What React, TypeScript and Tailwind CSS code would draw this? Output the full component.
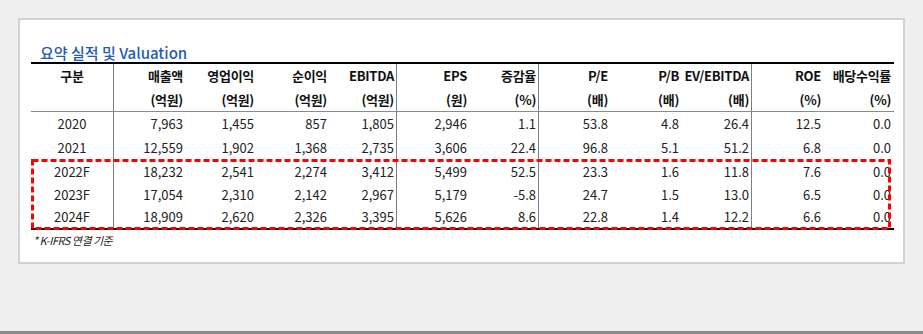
import React from "react";

type Col = { w: string; pr: string; top: string; bottom: string; sep?: boolean };

const cols: Col[] = [
  { w: "w-[83px]", pr: "", top: "구분", bottom: "", sep: true },
  { w: "w-[72px]", pr: "pr-[3px]", top: "매출액", bottom: "(억원)" },
  { w: "w-[71px]", pr: "pr-[3px]", top: "영업이익", bottom: "(억원)" },
  { w: "w-[73px]", pr: "pr-[3px]", top: "순이익", bottom: "(억원)" },
  { w: "w-[67px]", pr: "pr-[2px]", top: "EBITDA", bottom: "(억원)", sep: true },
  { w: "w-[73px]", pr: "pr-[3px]", top: "EPS", bottom: "(원)" },
  { w: "w-[69px]", pr: "pr-[2px]", top: "증감율", bottom: "(%)", sep: true },
  { w: "w-[72px]", pr: "pr-[3px]", top: "P/E", bottom: "(배)" },
  { w: "w-[71px]", pr: "pr-[3px]", top: "P/B", bottom: "(배)" },
  { w: "w-[70px]", pr: "pr-[2px]", top: "EV/EBITDA", bottom: "(배)", sep: true },
  { w: "w-[72px]", pr: "pr-[3px]", top: "ROE", bottom: "(%)" },
  { w: "w-[70px]", pr: "pr-[3px]", top: "배당수익률", bottom: "(%)" },
];

const rows: { h: string; cells: string[] }[] = [
  { h: "h-[24px]", cells: ["2020", "7,963", "1,455", "857", "1,805", "2,946", "1.1", "53.8", "4.8", "26.4", "12.5", "0.0"] },
  { h: "h-[24px]", cells: ["2021", "12,559", "1,902", "1,368", "2,735", "3,606", "22.4", "96.8", "5.1", "51.2", "6.8", "0.0"] },
  { h: "h-[23px]", cells: ["2022F", "18,232", "2,541", "2,274", "3,412", "5,499", "52.5", "23.3", "1.6", "11.8", "7.6", "0.0"] },
  { h: "h-[23px]", cells: ["2023F", "17,054", "2,310", "2,142", "2,967", "5,179", "-5.8", "24.7", "1.5", "13.0", "6.5", "0.0"] },
  { h: "h-[22px]", cells: ["2024F", "18,909", "2,620", "2,326", "3,395", "5,626", "8.6", "22.8", "1.4", "12.2", "6.6", "0.0"] },
];

function Cell({ col, i, children }: { col: Col; i: number; children: React.ReactNode }) {
  return (
    <div
      className={`${col.w} shrink-0 flex items-center ${i === 0 ? "justify-center" : `justify-end ${col.pr}`} ${
        col.sep ? "border-r border-[#7f7f7f]" : ""
      }`}
    >
      {children}
    </div>
  );
}

export default function App() {
  return (
    <div className="w-[923px] h-[334px] bg-[#efefef] pt-[18px] pl-[18px] border-b-[3px] border-[#8c8c8c] font-['Noto_Sans_CJK_KR',sans-serif]">
      <div className="w-[887px] h-[246px] bg-white border-2 border-[#d2d2d2] pt-[23px] pl-[11px]">
        <div className="h-[19px] pl-[9px] text-[15px] leading-[19px] font-medium text-[#1f5cb5]">요약 실적 및 Valuation</div>

        <div className="relative w-[863px] border-t-2 border-b-2 border-black text-[13px]">
          {/* header */}
          <div className="border-b border-[#8a8a8a] font-bold text-[#111] tracking-[-0.3px]">
            <div className="flex h-[24px]">
              {cols.map((c, i) => (
                <Cell key={i} col={c} i={i}>
                  {c.top}
                </Cell>
              ))}
            </div>
            <div className="flex h-[23px]">
              {cols.map((c, i) => (
                <Cell key={i} col={c} i={i}>
                  {c.bottom}
                </Cell>
              ))}
            </div>
          </div>

          {/* body */}
          {rows.map((r, ri) => (
            <div key={ri} className={`flex ${r.h} text-[#222]`}>
              {cols.map((c, i) => (
                <Cell key={i} col={c} i={i}>
                  {r.cells[i]}
                </Cell>
              ))}
            </div>
          ))}

          {/* red dashed highlight over forecast rows */}
          <svg className="absolute left-0 top-[95px] pointer-events-none" width="860" height="71">
            <rect x="1.5" y="1.5" width="857" height="68" fill="none" stroke="#ff0000" strokeWidth="3" strokeDasharray="6 3" />
          </svg>
        </div>

        <div className="pl-[2px] pt-[2px] text-[11px] italic tracking-[-0.5px] text-[#222]">* K-IFRS 연결 기준</div>
      </div>
    </div>
  );
}
